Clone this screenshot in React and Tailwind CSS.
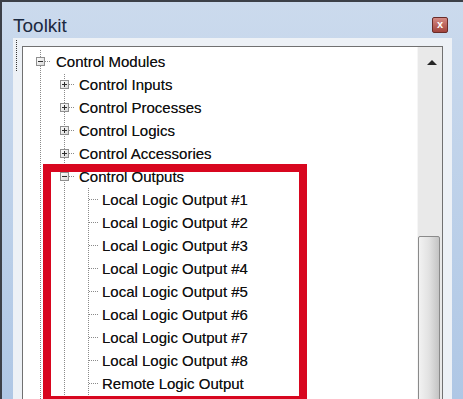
import React from "react";

const LINE = "#8a8a8a";

function Cell({ up, down, right, box, odd }) {
  return (
    <svg width="24" height="23" viewBox="0 0 24 23" className="shrink-0 block" shapeRendering="crispEdges">
      {up && (
        <line x1="12.5" y1="0" x2="12.5" y2={down ? 23 : 12} stroke={LINE} strokeWidth="1" strokeDasharray="1 1" strokeDashoffset={odd ? 1 : 0} />
      )}
      {!up && down && (
        <line x1="12.5" y1="12" x2="12.5" y2="23" stroke={LINE} strokeWidth="1" strokeDasharray="1 1" strokeDashoffset={odd ? 1 : 0} />
      )}
      {right && (
        <line x1="13" y1="11.5" x2="22" y2="11.5" stroke={LINE} strokeWidth="1" strokeDasharray="1 1" />
      )}
      {box && (
        <g>
          <defs>
            <linearGradient id="bx" x1="0" y1="0" x2="1" y2="1">
              <stop offset="0" stopColor="#ffffff" />
              <stop offset="1" stopColor="#d6d6d6" />
            </linearGradient>
          </defs>
          <rect x="8.5" y="7.5" width="8" height="8" fill="url(#bx)" stroke="#8f8f8f" />
          <line x1="10" y1="11.5" x2="15" y2="11.5" stroke="#2e2e2e" />
          {box === "plus" && <line x1="12.5" y1="9" x2="12.5" y2="14" stroke="#2e2e2e" />}
        </g>
      )}
    </svg>
  );
}

const rows = [
  { level: 0, text: "Control Modules", box: "minus" },
  { level: 1, text: "Control Inputs", box: "plus" },
  { level: 1, text: "Control Processes", box: "plus" },
  { level: 1, text: "Control Logics", box: "plus" },
  { level: 1, text: "Control Accessories", box: "plus" },
  { level: 1, text: "Control Outputs", box: "minus" },
  { level: 2, text: "Local Logic Output #1" },
  { level: 2, text: "Local Logic Output #2" },
  { level: 2, text: "Local Logic Output #3" },
  { level: 2, text: "Local Logic Output #4" },
  { level: 2, text: "Local Logic Output #5" },
  { level: 2, text: "Local Logic Output #6" },
  { level: 2, text: "Local Logic Output #7" },
  { level: 2, text: "Local Logic Output #8" },
  { level: 2, text: "Remote Logic Output" },
  { level: 2, text: "" },
];

const textMargin = ["ml-[4px]", "ml-[3px]", "ml-[2px]"];

function Row({ r, i }) {
  const odd = i % 2 === 1;
  const cells = [];
  for (let c = 0; c < r.level; c++) {
    cells.push(<Cell key={c} up down odd={odd} />);
  }
  cells.push(<Cell key="own" up down right box={r.box} odd={odd} />);
  return (
    <div className="flex items-center h-[23px]">
      {cells}
      <span className={`${textMargin[r.level]} text-[15px] leading-[23px] text-[#0f0f0f] whitespace-nowrap [text-shadow:0_0_0.6px_rgba(0,0,0,0.55)]`}>{r.text}</span>
    </div>
  );
}

export default function App() {
  return (
    <div
      className="relative w-[463px] h-[399px] overflow-hidden border-t-2 border-l-2 border-[#3c4048] bg-gradient-to-b from-[#cbdaed] to-[#afc7e5] flex flex-col"
      style={{ fontFamily: '"Liberation Sans", Arial, sans-serif' }}
    >
      {/* title bar */}
      <div className="h-[36px] shrink-0 flex items-start justify-between pl-[11px] pr-[15px]">
        <span className="pt-[13px] text-[19px] leading-[22px] text-[#1c2a40]">Toolkit</span>
        <div className="mt-[15px] w-[16px] h-[16px] rounded-[2px] border border-[#6a2c29] bg-gradient-to-b from-[#d48a84] to-[#a2433c] flex items-center justify-center">
          <span className="text-white text-[11px] font-bold leading-none -mt-[1px]">x</span>
        </div>
      </div>

      {/* panel */}
      <div className="flex-1 ml-[11px] mr-[11px] bg-[#edf1f6] flex pt-[8px] pr-[9px]">
        <div className="w-[9px] shrink-0 -mt-[8px]">
          <svg width="9" height="36" viewBox="0 0 9 36" className="block" shapeRendering="crispEdges">
            <line x1="3.5" y1="2" x2="3.5" y2="34" stroke="#3a3a3a" strokeDasharray="1 1" />
          </svg>
        </div>
        <div className="flex-1 border border-[#717171] bg-white flex">
          <div className="flex-1 pt-[3px] pl-[5px]">
            {rows.map((r, i) => (
              <Row key={i} r={r} i={i} />
            ))}
          </div>
          {/* scrollbar */}
          <div className="w-[25px] shrink-0 bg-[#e9e9e9] border-l border-[#f6f6f6] flex flex-col">
            <div className="h-[189px] shrink-0 flex justify-center pt-[13px] pl-[3px]">
              <svg width="10" height="5" viewBox="0 0 10 5" className="block">
                <polygon points="0,5 5,0 10,5" fill="#262626" />
              </svg>
            </div>
            <div className="flex-1 mr-[2px] border border-[#8a8a8a] rounded-t-[2px] bg-gradient-to-r from-[#f2f2f2] via-[#e2e2e2] to-[#c4c4c4]" />
          </div>
        </div>
      </div>

      {/* annotation */}
      <div className="absolute left-[41px] top-[162px] w-[264px] h-[240px] border-[8px] border-[#d8071f] pointer-events-none" />
    </div>
  );
}
